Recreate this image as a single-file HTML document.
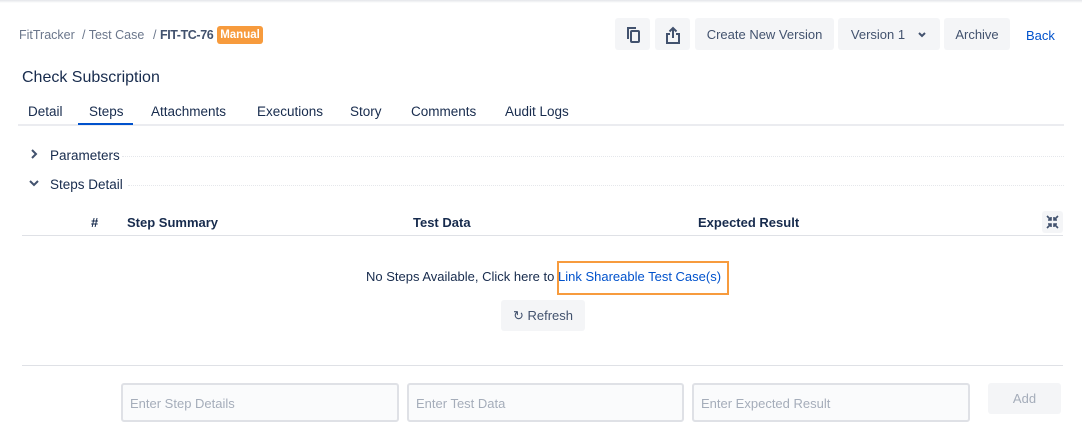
<!DOCTYPE html>
<html><head><meta charset="utf-8"><style>
*{box-sizing:border-box;margin:0;padding:0}
body{width:1082px;height:436px;background:#fff;font-family:"Liberation Sans",sans-serif;position:relative;overflow:hidden;color:#172b4d}
.a{position:absolute;white-space:nowrap}
.btn{position:absolute;background:#f4f5f7;border-radius:3px;top:18px;height:32px;font-size:13px;color:#42526e;display:flex;align-items:center;justify-content:center;padding-top:1px}
.tab{position:absolute;top:104px;font-size:13.5px;color:#172b4d}
.th{position:absolute;top:215px;font-size:13px;font-weight:bold;color:#172b4d}
.inp{position:absolute;top:383px;height:39px;border:2px solid #dfe1e6;background:#fafbfc;border-radius:3px;font-size:13px;color:#a5adba;padding:11px 7px}
</style></head><body>
<div class="a" style="left:0;top:0;width:1082px;height:3px;background:linear-gradient(#e3e5ea,#fff)"></div>
<div class="a" style="left:19px;top:28px;font-size:12.5px;color:#6b778c">FitTracker</div>
<div class="a" style="left:82px;top:28px;font-size:12.5px;color:#6b778c">/ Test Case</div>
<div class="a" style="left:153px;top:28px;font-size:12.5px;color:#6b778c">/ <b style="color:#42526e;letter-spacing:-0.4px">FIT-TC-76</b></div>
<div class="a" style="left:217px;top:26px;width:46px;height:18px;background:#f79b3d;border-radius:3px;color:#fff;font-size:11.5px;font-weight:bold;text-align:center;line-height:18px">Manual</div>
<div class="btn" style="left:615px;width:35px"><svg width="16" height="18" viewBox="0 0 16 18" fill="none" stroke="#42526e" stroke-width="2"><path d="M3 13V2h8"/><rect x="6" y="5" width="8" height="11" rx="1"/></svg></div>
<div class="btn" style="left:655px;width:35px"><svg width="16" height="18" viewBox="0 0 16 18" fill="none" stroke="#42526e" stroke-width="2"><path d="M5 8H2v9h12V8h-3M8 12V2M4.5 5.5 8 2l3.5 3.5"/></svg></div>
<div class="btn" style="left:695px;width:139px">Create New Version</div>
<div class="btn" style="left:838px;width:102px">Version 1 <svg style="margin-left:12px" width="10" height="8" viewBox="0 0 10 8" fill="none" stroke="#42526e" stroke-width="2"><path d="M2 2l3 3 3-3"/></svg></div>
<div class="btn" style="left:944px;width:66px">Archive</div>
<div class="a" style="left:1026px;top:28px;font-size:13px;color:#0052cc">Back</div>
<div class="a" style="left:22px;top:69px;font-size:16px;color:#172b4d">Check Subscription</div>
<div class="tab" style="left:28px">Detail</div>
<div class="tab" style="left:89px">Steps</div>
<div class="tab" style="left:151px">Attachments</div>
<div class="tab" style="left:257px">Executions</div>
<div class="tab" style="left:350px">Story</div>
<div class="tab" style="left:411px">Comments</div>
<div class="tab" style="left:505px">Audit Logs</div>
<div class="a" style="left:18px;top:124px;width:1046px;height:2px;background:#ebecf0"></div>
<div class="a" style="left:78px;top:123px;width:55px;height:2px;background:#0052cc"></div>
<svg class="a" style="left:30px;top:149px" width="8" height="10" viewBox="0 0 8 10" fill="none" stroke="#42526e" stroke-width="2"><path d="M2 1l4 4-4 4"/></svg>
<div class="a" style="left:50px;top:148px;font-size:13.5px">Parameters</div>
<div class="a" style="left:122px;top:156px;width:942px;border-top:1px dotted #e5e7eb"></div>
<svg class="a" style="left:29px;top:179px" width="10" height="8" viewBox="0 0 10 8" fill="none" stroke="#42526e" stroke-width="2"><path d="M1 2l4 4 4-4"/></svg>
<div class="a" style="left:50px;top:177px;font-size:13.5px">Steps Detail</div>
<div class="a" style="left:128px;top:185px;width:936px;border-top:1px dotted #e5e7eb"></div>
<div class="th" style="left:91px">#</div>
<div class="th" style="left:127px">Step Summary</div>
<div class="th" style="left:413px">Test Data</div>
<div class="th" style="left:698px">Expected Result</div>
<div class="a" style="left:1042px;top:211px;width:21px;height:22px;background:#f4f5f7;border-radius:3px"><svg width="21" height="22" viewBox="0 0 21 22" fill="none" stroke="#42526e" stroke-width="1.6"><path d="M5 5l4 4M9 6v3H6M16 5l-4 4M12 6v3h3M5 17l4-4M9 16v-3H6M16 17l-4-4M12 16v-3h3"/></svg></div>
<div class="a" style="left:22px;top:235px;width:1041px;height:1px;background:#dfe1e6"></div>
<div class="a" style="left:366px;top:269px;font-size:13px">No Steps Available, Click here to <span style="color:#0052cc">Link Shareable Test Case(s)</span></div>
<div class="a" style="left:557px;top:261px;width:172px;height:34px;border:2px solid #f79b3d"></div>
<div class="a" style="left:501px;top:300px;width:84px;height:31px;background:#f4f5f7;border-radius:3px;font-size:13px;color:#42526e;line-height:32px;text-align:center">&#8635; Refresh</div>
<div class="a" style="left:22px;top:365px;width:1041px;height:1px;background:#dfe1e6"></div>
<div class="inp" style="left:121px;width:278px">Enter Step Details</div>
<div class="inp" style="left:407px;width:277px">Enter Test Data</div>
<div class="inp" style="left:692px;width:278px">Enter Expected Result</div>
<div class="a" style="left:988px;top:383px;width:73px;height:31px;background:#f4f5f7;border-radius:3px;font-size:13px;color:#a5adba;line-height:31px;text-align:center">Add</div>
</body></html>
